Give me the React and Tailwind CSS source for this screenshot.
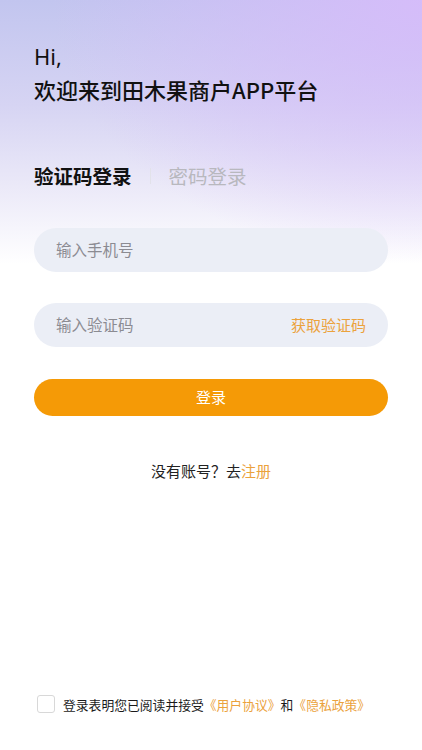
import React from 'react';

const App = () => {
  return (
    <div
      className="relative w-[422px] h-[750px] flex flex-col bg-white bg-no-repeat bg-[length:100%_300px] bg-[radial-gradient(ellipse_at_100%_0%,rgba(214,188,250,0.95)_0%,rgba(214,188,250,0)_62%),linear-gradient(180deg,#c2c5ef_0%,#d6d4f3_35%,#ebe9f8_62%,#ffffff_88%)] font-['Noto_Sans_CJK_SC','Noto_Sans',sans-serif]"
    >
      {/* Greeting */}
      <div className="pt-[40px] px-[34px] text-[#111] text-[22px] leading-[33px] font-medium">
        <div className="font-['Noto_Sans','Noto_Sans_CJK_SC',sans-serif] font-normal">Hi,</div>
        <div>欢迎来到田木果商户APP平台</div>
      </div>

      {/* Tabs */}
      <div className="mt-[56px] px-[34px] flex items-center">
        <span className="text-[19.5px] font-bold text-[#111] leading-[28px]">验证码登录</span>
        <span className="mx-[18px] w-px h-[16px] bg-[#e2e2ea]"></span>
        <span className="text-[19.5px] text-[#b8b8be] leading-[28px]">密码登录</span>
      </div>

      {/* Form */}
      <div className="mt-[38px] px-[34px] flex flex-col">
        <div className="h-[44px] rounded-full bg-[#ebeef6] flex items-center px-[22px]">
          <span className="text-[15.5px] text-[#8b8b92]">输入手机号</span>
        </div>
        <div className="mt-[31px] h-[44px] rounded-full bg-[#ebeef6] flex items-center justify-between px-[22px]">
          <span className="text-[15.5px] text-[#8b8b92]">输入验证码</span>
          <span className="text-[15px] text-[#eba23c]">获取验证码</span>
        </div>
        <button
          type="button"
          className="mt-[32px] h-[37px] rounded-full bg-[#f59a06] text-white text-[15px] flex items-center justify-center"
        >
          登录
        </button>
        <div className="mt-[44px] text-center text-[15px] leading-[22px] text-[#222]">
          没有账号？去<span className="text-[#eba23c]">注册</span>
        </div>
      </div>

      <div className="flex-1"></div>

      {/* Agreement */}
      <div className="pb-[36px] px-[37px] flex items-center gap-[8px]">
        <span className="w-[18px] h-[18px] rounded-[3px] border border-[#d8d8d8] bg-white shrink-0"></span>
        <span className="text-[12.8px] text-[#1a1a1a] whitespace-nowrap">
          登录表明您已阅读并接受<span className="text-[#eba23c]">《用户协议》</span>和<span className="text-[#eba23c]">《隐私政策》</span>
        </span>
      </div>
    </div>
  );
};

export default App;
